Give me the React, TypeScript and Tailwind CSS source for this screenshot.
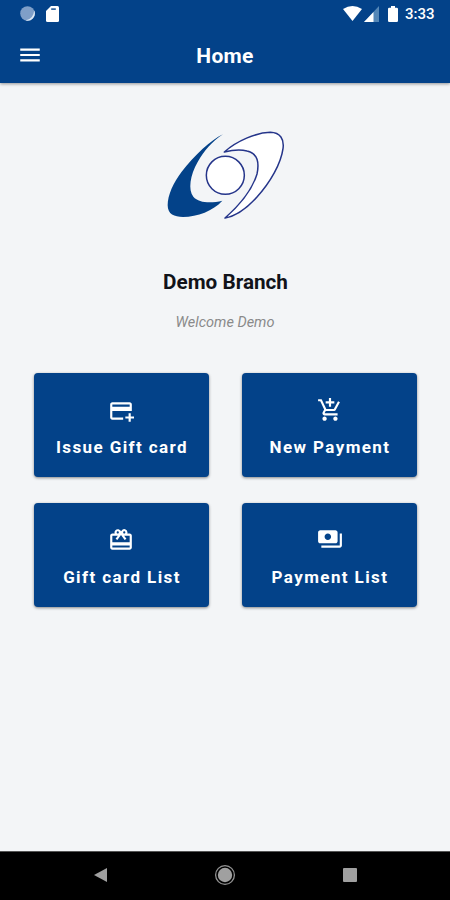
import React from 'react';
import type { IconType } from 'react-icons';
import { MdAddCard, MdAddShoppingCart, MdMenu, MdPayments, MdRedeem } from 'react-icons/md';

interface Action {
  label: string;
  icon: IconType;
  iconClass: string;
}

const actions: Action[] = [
  { label: 'Issue Gift card', icon: MdAddCard, iconClass: 'mr-0.5 mt-px -mb-px' },
  { label: 'New Payment', icon: MdAddShoppingCart, iconClass: '' },
  { label: 'Gift card List', icon: MdRedeem, iconClass: 'mr-px' },
  { label: 'Payment List', icon: MdPayments, iconClass: '-mt-px mb-px' },
];

const StatusBar: React.FC = () => (
  <div className="flex h-[27px] items-center pl-5 pr-4 text-white">
    <svg className="h-4 w-4" viewBox="0 0 16 16">
      <circle cx="7.5" cy="7.5" r="7.3" fill="#7f9fc8" />
      <path d="M14.2 4.5A7.3 7.3 0 0 1 5.5 14.5Q13.5 13 14.2 4.5Z" fill="#dce8f5" />
    </svg>
    <svg className="ml-2.5 h-4 w-[13px]" viewBox="0 0 13 16" fill="currentColor">
      <path d="M5 0h6.5Q13 0 13 1.5v13q0 1.5-1.5 1.5h-10Q0 16 0 14.5V5Z" />
      <path d="M5.2 2.4h4.6v1.4H5.2z" fill="#034289" />
    </svg>
    <div className="ml-auto flex items-center">
      <svg className="h-[15px] w-[19px]" viewBox="0 0 19 15" fill="currentColor">
        <path d="M9.5 15 0 3Q9.5-3 19 3Z" />
      </svg>
      <svg className="ml-0.5 h-4 w-[15px]" viewBox="0 0 15 16">
        <path d="M15 0v16H0Z" fill="#5487b7" />
        <path d="M9.5 6v10H0Z" fill="#fff" />
      </svg>
      <svg className="ml-[9px] h-4 w-2.5" viewBox="0 0 10 16" fill="currentColor">
        <path d="M3 0h4v1.8h1.7Q10 1.8 10 3.1v11.6Q10 16 8.7 16H1.3Q0 16 0 14.7V3.1Q0 1.8 1.3 1.8H3Z" />
      </svg>
      <span className="ml-[7px] w-[29px] whitespace-nowrap text-[15px] font-medium leading-4">3:33</span>
    </div>
  </div>
);

const Header: React.FC = () => (
  <header className="h-[83px] bg-[#034289] text-white shadow-[0_1px_3px_rgba(0,0,0,0.4)]">
    <StatusBar />
    <div className="grid h-14 grid-cols-3 items-center px-[17px]">
      <MdMenu size={26} />
      <h1 className="pt-[3px] text-center text-[21px] font-bold tracking-[0.3px]">Home</h1>
    </div>
  </header>
);

const Logo: React.FC = () => (
  <svg className="h-[110px] w-[140px]" viewBox="0 0 420 330">
    <path
      d="M204 43C167 60 120 105 80 155C55 188 38 225 38 256C38 283 58 291 84 291C128 290 174 273 202 242C170 250 132 250 115 230C99 210 105 165 128 126C148 91 171 65 204 43Z"
      fill="#034289"
    />
    <g fill="#fff" stroke="#25358a" strokeWidth="4.5" strokeLinejoin="round">
      <circle cx="211" cy="166" r="57" />
      <path d="M208 96C245 63 303 38 346 37C376 38 388 57 384 86C378 130 347 186 306 231C276 264 239 289 210 294C251 258 292 208 306 162C314 124 304 99 276 93C255 88 233 90 208 96Z" />
    </g>
  </svg>
);

const ActionCard: React.FC<{ action: Action }> = ({ action }) => {
  const Icon = action.icon;
  return (
    <button className="flex h-[104px] flex-col items-center rounded bg-[#034289] pt-6 text-white shadow-[0_1px_3px_rgba(0,0,0,0.45)]">
      <Icon size={26} className={action.iconClass} />
      <span className="mt-3 whitespace-nowrap pl-px text-[17px] font-bold leading-6 tracking-[1.4px]">
        {action.label}
      </span>
    </button>
  );
};

const NavBar: React.FC = () => (
  <nav className="flex h-[49px] items-center justify-between border-t border-[#555] bg-black px-[93px] pb-0.5">
    <svg className="h-4 w-3.5" viewBox="0 0 14 16" fill="#a0a0a0">
      <path d="M14 1v14L1 8Z" />
    </svg>
    <svg className="h-[22px] w-[22px]" viewBox="0 0 22 22">
      <circle cx="11" cy="11" r="9.4" fill="none" stroke="#929292" strokeWidth="1.3" />
      <circle cx="11" cy="11" r="7.2" fill="#a0a0a0" />
    </svg>
    <div className="h-3.5 w-3.5 rounded-[1px] bg-[#a0a0a0]" />
  </nav>
);

export default function App() {
  return (
    <div className="flex h-screen w-full flex-col bg-[#f3f5f7] font-['Roboto',sans-serif]">
      <Header />
      <main className="flex flex-1 flex-col items-center pt-[37px]">
        <Logo />
        <h2 className="mt-9 pl-px text-[20.7px] font-bold leading-8 text-[#111319]">Demo Branch</h2>
        <p className="mt-[13px] text-[14.5px] italic leading-6 text-[#8a8a8a]">Welcome Demo</p>
        <div className="mt-[38px] grid w-full grid-cols-2 gap-x-[33px] gap-y-[26px] pl-[34px] pr-[33px]">
          {actions.map((action) => (
            <ActionCard key={action.label} action={action} />
          ))}
        </div>
      </main>
      <NavBar />
    </div>
  );
}
